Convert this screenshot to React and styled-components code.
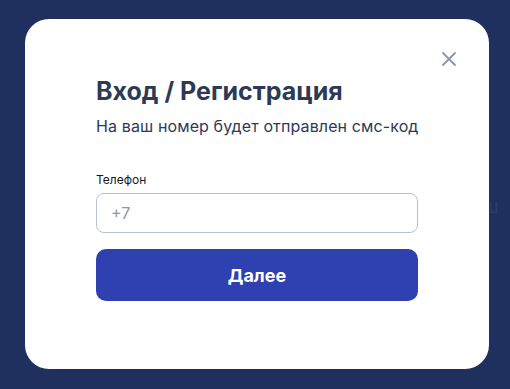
import styled, { createGlobalStyle } from 'styled-components';

const GlobalStyle = createGlobalStyle`
  html, body {
    margin: 0;
    padding: 0;
    background: #1f305e;
    font-family: Inter, "Liberation Sans", sans-serif;
  }
  * { box-sizing: border-box; }
`;

const Page = styled.div`
  position: relative;
  width: 510px;
  height: 389px;
  overflow: hidden;
  display: flex;
  align-items: flex-start;
  padding: 19px 0 0 25px;
`;

const BackText = styled.span`
  position: absolute;
  left: 483px;
  top: 195px;
  font-size: 19px;
  color: #2a3b6c;
`;

const Modal = styled.div`
  position: relative;
  width: 464px;
  height: 350px;
  background: #fff;
  border-radius: 24px;
  padding: 56px 71px 0 71px;
  display: flex;
  flex-direction: column;
`;

const Close = styled.button`
  position: absolute;
  top: 28px;
  right: 28px;
  width: 24px;
  height: 24px;
  padding: 0;
  border: none;
  background: none;
  display: flex;
  align-items: center;
  justify-content: center;
  cursor: pointer;
`;

const Title = styled.h1`
  margin: 0;
  font-size: 25px;
  line-height: 32px;
  font-weight: 700;
  color: #2d3a55;
`;

const Subtitle = styled.p`
  margin: 7px 0 0 0;
  font-size: 16px;
  line-height: 24px;
  letter-spacing: 0.12px;
  white-space: nowrap;
  color: #2d3a55;
`;

const Label = styled.label`
  margin-top: 34px;
  font-size: 12px;
  line-height: 16px;
  color: #14181f;
`;

const Input = styled.input`
  margin-top: 5px;
  width: 100%;
  height: 40px;
  border: 1px solid #b9c1cf;
  border-radius: 8px;
  padding: 0 14px;
  font-family: inherit;
  font-size: 16px;
  color: #2d3a55;
  outline: none;
  &::placeholder { color: #8e97a6; }
`;

const Submit = styled.button`
  margin-top: 16px;
  width: 100%;
  height: 52px;
  border: none;
  border-radius: 10px;
  background: #2f40b0;
  color: #fff;
  font-family: inherit;
  font-size: 18px;
  font-weight: 700;
  cursor: pointer;
`;

export default function App() {
  return (
    <Page>
      <GlobalStyle />
      <BackText>ш</BackText>
      <Modal>
        <Close aria-label="Закрыть">
          <svg width="14" height="14" viewBox="0 0 14 14">
            <path d="M1 1L13 13M13 1L1 13" stroke="#8a96a8" strokeWidth="1.8" strokeLinecap="round" />
          </svg>
        </Close>
        <Title>Вход / Регистрация</Title>
        <Subtitle>На ваш номер будет отправлен смс-код</Subtitle>
        <Label htmlFor="phone">Телефон</Label>
        <Input id="phone" placeholder="+7" />
        <Submit>Далее</Submit>
      </Modal>
    </Page>
  );
}
